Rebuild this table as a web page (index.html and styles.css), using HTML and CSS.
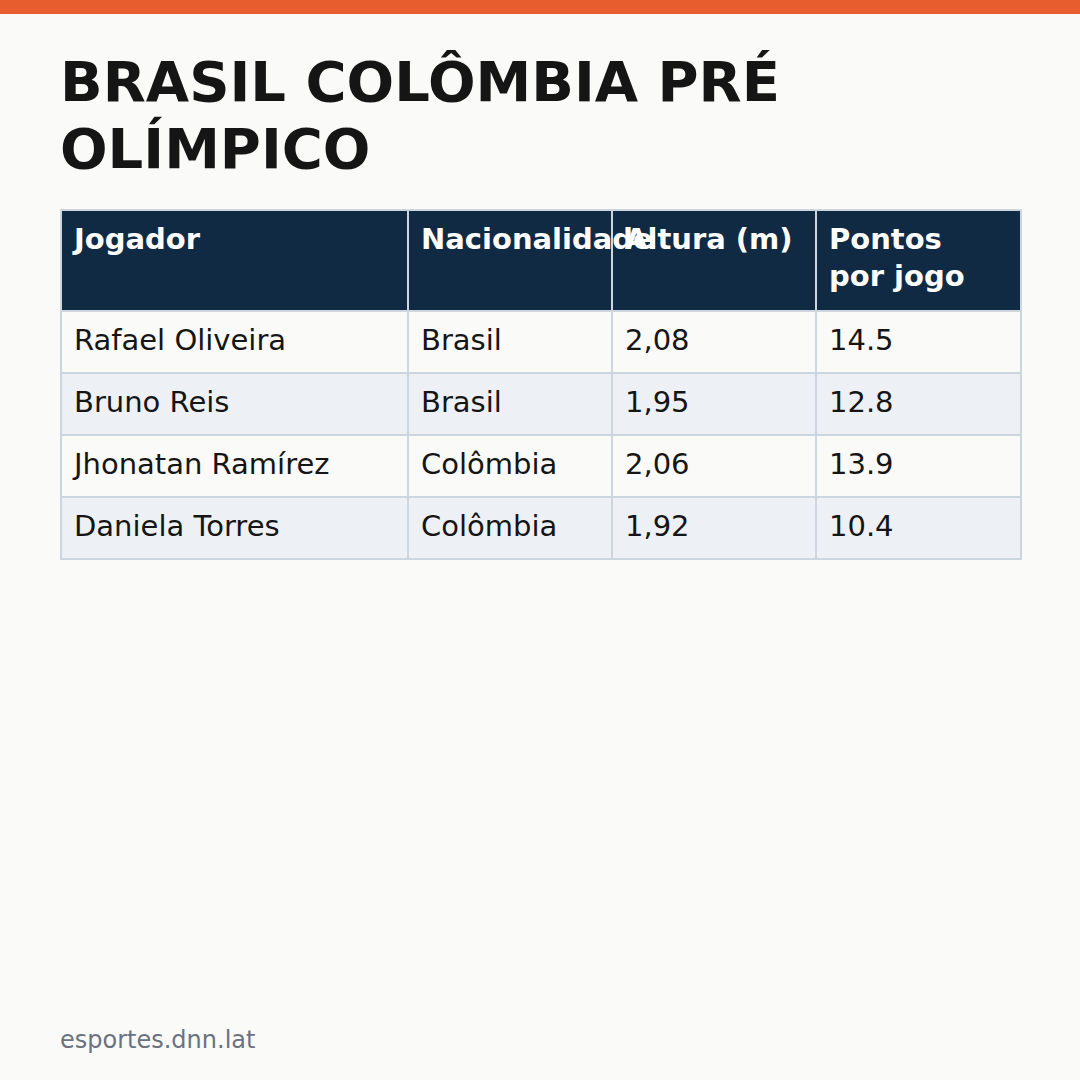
FILE: index.html
```html
<!DOCTYPE html>
<html lang="pt">
<head>
  <meta charset="UTF-8">
  <title>Brasil Colômbia Pré Olímpico</title>
  <link rel="stylesheet" href="styles.css">
</head>
<body>
  <div class="topbar"></div>
  <div class="page">
    <h1>BRASIL COLÔMBIA PRÉ OLÍMPICO</h1>
    <table class="stats">
      <colgroup>
        <col class="c-name">
        <col class="c-nat">
        <col class="c-alt">
        <col class="c-pts">
      </colgroup>
      <thead>
        <tr>
          <th>Jogador</th>
          <th>Nacionalidade</th>
          <th>Altura (m)</th>
          <th>Pontos por jogo</th>
        </tr>
      </thead>
      <tbody>
        <tr><td>Rafael Oliveira</td><td>Brasil</td><td>2,08</td><td>14.5</td></tr>
        <tr><td>Bruno Reis</td><td>Brasil</td><td>1,95</td><td>12.8</td></tr>
        <tr><td>Jhonatan Ramírez</td><td>Colômbia</td><td>2,06</td><td>13.9</td></tr>
        <tr><td>Daniela Torres</td><td>Colômbia</td><td>1,92</td><td>10.4</td></tr>
      </tbody>
    </table>
    <div class="footer">esportes.dnn.lat</div>
  </div>
</body>
</html>
```

FILE: styles.css
```css
html, body {
  margin: 0;
  padding: 0;
}
body {
  font-family: "DejaVu Sans", sans-serif;
  background: #fafaf8;
  color: #151515;
  width: 1080px;
  height: 1080px;
  overflow: hidden;
}
.topbar {
  height: 14px;
  background: #e85d2e;
}
.page {
  display: flex;
  flex-direction: column;
  height: 1066px;
  box-sizing: border-box;
  padding: 34px 60px 26px;
}
h1 {
  margin: 0 0 27px;
  font-size: 56px;
  line-height: 67px;
  font-weight: bold;
  color: #151515;
}
.stats {
  width: 961px;
  table-layout: fixed;
  border-collapse: collapse;
  font-size: 29px;
  line-height: 37px;
}
.c-name { width: 347px; }
.c-nat { width: 204px; }
.c-alt { width: 204px; }
.c-pts { width: 205px; }
.stats th,
.stats td {
  border: 2px solid #cdd5df;
  padding: 10px 16px 13px 12px;
  text-align: left;
  vertical-align: top;
  white-space: nowrap;
}
.stats th {
  background: #112a44;
  color: #ffffff;
  font-weight: bold;
  white-space: normal;
  padding-bottom: 15px;
}
.stats tbody tr:nth-child(odd) {
  background: #fafaf8;
}
.stats tbody tr:nth-child(even) {
  background: #edf1f5;
}
.footer {
  margin-top: auto;
  font-size: 24px;
  color: #6b7280;
}
```
